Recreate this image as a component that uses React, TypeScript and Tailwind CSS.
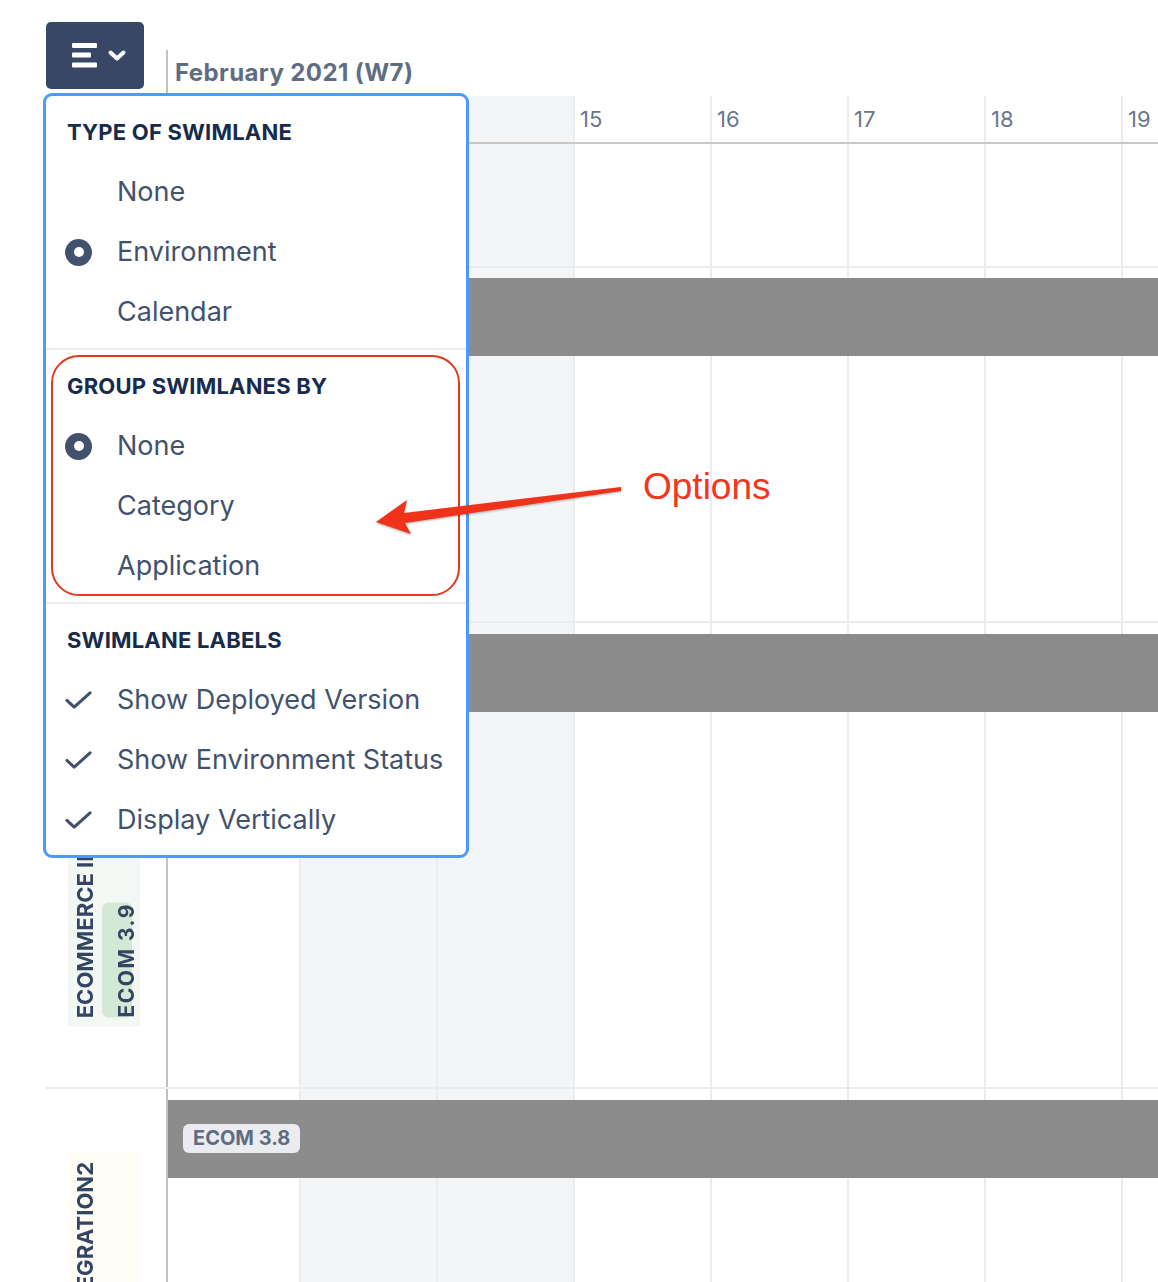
import React from "react";

const days = [12, 13, 14, 15, 16, 17, 18, 19];
const weekend = [13, 14];

// one strip of day columns, stretched to whatever height the parent gives
const Cells = ({ className = "", labels = false }: { className?: string; labels?: boolean }) => (
  <div className={`flex ${className}`}>
    {days.map((d, i) => (
      <div
        key={d}
        className={`shrink-0 h-full ${i === 0 ? "w-[131px]" : "w-[137px] border-l-2 border-[#ebecf0]"} ${
          weekend.includes(d) ? "bg-[#f4f5f7]" : ""
        }`}
      >
        {labels && <span className="block pl-[5px] text-[22px] leading-[46px] text-[#6b778c]">{d}</span>}
      </div>
    ))}
  </div>
);

const Radio = () => (
  <span className="flex h-[27px] w-[27px] items-center justify-center rounded-full bg-[#42526e]">
    <span className="h-[10px] w-[10px] rounded-full bg-white" />
  </span>
);

const Check = () => (
  <svg width="28" height="20" viewBox="0 0 28 20" fill="none">
    <path d="M2 10.5 L9.5 17.5 L26 2.5" stroke="#42526e" strokeWidth="3.2" strokeLinecap="round" strokeLinejoin="round" />
  </svg>
);

type Item = { label: string; icon?: "radio" | "check" };

const Section = ({ title, items, last = false }: { title: string; items: Item[]; last?: boolean }) => (
  <div className={`pt-[23px] ${last ? "pb-[5px]" : "pb-[6px] border-b-2 border-[#ebecf0]"}`}>
    <div className="pl-[21px] mb-[17px] h-[26px] text-[22px] leading-[26px] font-bold tracking-[0.2px] text-[#172b4d]">
      {title}
    </div>
    {items.map((it) => (
      <div key={it.label} className="flex h-[60px] items-center pl-[19px]">
        <span className="mr-[25px] flex w-[27px] justify-center">
          {it.icon === "radio" && <Radio />}
          {it.icon === "check" && <Check />}
        </span>
        <span className="text-[27px] text-[#42526e]">{it.label}</span>
      </div>
    ))}
  </div>
);

const Vertical = ({ children, className = "" }: { children: React.ReactNode; className?: string }) => (
  <span className={`[writing-mode:vertical-rl] rotate-180 whitespace-nowrap font-bold ${className}`}>{children}</span>
);

export default function App() {
  return (
    <div className="relative h-[1282px] w-[1158px] overflow-hidden bg-white font-[family-name:Inter,sans-serif]">
      <div className="pl-[46px]">
        {/* header */}
        <div className="flex">
          <div className="w-[120px] shrink-0 pt-[22px]">
            <button className="block h-[67px] w-[98px] rounded-[5px] bg-[#384766]">
              <svg width="98" height="67" viewBox="0 0 98 67">
                <rect x="26" y="21" width="25" height="5" rx="1" fill="white" />
                <rect x="26" y="30.5" width="19" height="5" rx="1" fill="white" />
                <rect x="26" y="40.5" width="25" height="5" rx="1" fill="white" />
                <path d="M64.5 30.5 L71 36.5 L77.5 30.5" stroke="white" strokeWidth="4" fill="none" strokeLinecap="round" strokeLinejoin="round" />
              </svg>
            </button>
          </div>
          <div className="mt-[50px] min-w-0 flex-1 overflow-hidden border-l-2 border-[#c1c1c1]">
            <div className="h-[46px] pl-[7px] text-[24px] leading-[46px] font-bold tracking-[0.4px] text-[#5e6c84]">
              February 2021 (W7)
            </div>
            <Cells labels className="h-[48px] border-b-2 border-[#c8c8c8]" />
          </div>
        </div>

        {/* swimlane above, mostly under the menu */}
        <div className="flex h-[122px]">
          <div className="w-[120px] shrink-0" />
          <div className="min-w-0 flex-1 overflow-hidden border-l-2 border-[#c1c1c1]">
            <Cells className="h-full" />
          </div>
        </div>

        <div className="flex h-[355px] border-t-2 border-[#ebecf0]">
          <div className="w-[120px] shrink-0" />
          <div className="flex min-w-0 flex-1 flex-col overflow-hidden border-l-2 border-[#c1c1c1]">
            <Cells className="h-[10px] shrink-0" />
            <div className="h-[78px] shrink-0 bg-[#8c8c8c]" />
            <Cells className="flex-1" />
          </div>
        </div>

        <div className="flex h-[466px] border-t-2 border-[#ebecf0]">
          <div className="flex w-[120px] shrink-0 pl-[22px] pr-[26px] pt-[61px] pb-[60px]">
            <div className="flex flex-1 items-end gap-[7px] overflow-hidden rounded bg-[#f4f8f5] pl-[7px] pb-[9px]">
              <Vertical className="text-[22px] leading-[20px] text-[#344563]">ECOMMERCE INTEGRATION</Vertical>
              <Vertical className="w-[30px] rounded-md bg-[#d3e9d5] py-[10px] text-[21px] leading-[30px] tracking-[1.5px] text-[#344563]">
                ECOM 3.9
              </Vertical>
            </div>
          </div>
          <div className="flex min-w-0 flex-1 flex-col overflow-hidden border-l-2 border-[#c1c1c1]">
            <Cells className="h-[11px] shrink-0" />
            <div className="h-[78px] shrink-0 bg-[#8c8c8c]" />
            <Cells className="flex-1" />
          </div>
        </div>

        <div className="flex h-[300px] border-t-2 border-[#ebecf0]">
          <div className="flex w-[120px] shrink-0 pl-[22px] pr-[26px] pt-[63px]">
            <div className="flex flex-1 items-start overflow-hidden bg-[#fffdf5] pl-[7px] pt-[10px]">
              <Vertical className="text-[22px] leading-[20px] text-[#344563]">ECOMMERCE INTEGRATION2</Vertical>
            </div>
          </div>
          <div className="flex min-w-0 flex-1 flex-col overflow-hidden border-l-2 border-[#c1c1c1]">
            <Cells className="h-[11px] shrink-0" />
            <div className="h-[78px] shrink-0 bg-[#8c8c8c] pl-[15px] pt-[24px]">
              <span className="inline-block h-[29px] rounded-md bg-[#ebecf0] px-[10px] text-[20px] leading-[29px] font-bold text-[#5e6c84]">
                ECOM 3.8
              </span>
            </div>
            <Cells className="flex-1" />
          </div>
        </div>
      </div>

      {/* options menu */}
      <div className="absolute left-[43px] top-[93px] w-[426px] rounded-[9px] border-[3px] border-[#4c9aff] bg-white">
        <Section
          title="TYPE OF SWIMLANE"
          items={[{ label: "None" }, { label: "Environment", icon: "radio" }, { label: "Calendar" }]}
        />
        <Section
          title="GROUP SWIMLANES BY"
          items={[{ label: "None", icon: "radio" }, { label: "Category" }, { label: "Application" }]}
        />
        <Section
          title="SWIMLANE LABELS"
          last
          items={[
            { label: "Show Deployed Version", icon: "check" },
            { label: "Show Environment Status", icon: "check" },
            { label: "Display Vertically", icon: "check" },
          ]}
        />
        <div className="pointer-events-none absolute left-[5px] top-[259px] h-[241px] w-[409px] rounded-[28px] border-2 border-[#e5391f]" />
      </div>

      {/* annotation */}
      <svg className="pointer-events-none absolute left-0 top-0 drop-shadow-[0_1px_1px_rgba(0,0,0,0.35)]" width="1158" height="1282">
        <polygon
          points="621,487 404,513 407,500 376,522 411,534 405,523 621,491"
          fill="#f0321b"
          strokeLinejoin="round"
        />
      </svg>
      <div className="absolute left-[643px] top-[468px] font-[family-name:'Liberation_Sans',sans-serif] text-[37px] leading-none text-[#f1361d]">
        Options
      </div>
    </div>
  );
}
